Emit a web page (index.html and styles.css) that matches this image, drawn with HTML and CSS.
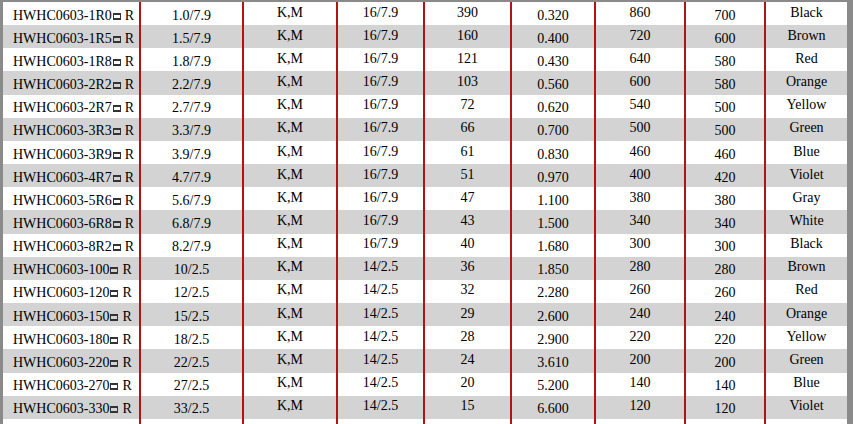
FILE: index.html
```html
<!DOCTYPE html>
<html>
<head>
<meta charset="utf-8">
<link rel="stylesheet" href="styles.css">
</head>
<body>
<div class="sheet">
  <div class="row"><div class="c name">HWHC0603-1R0<span class="sq"></span>R</div><div class="c lo">1.0/7.9</div><div class="c hi">K,M</div><div class="c hi">16/7.9</div><div class="c hi">390</div><div class="c lo">0.320</div><div class="c hi">860</div><div class="c lo">700</div><div class="c hi last">Black</div></div>
  <div class="row alt"><div class="c name">HWHC0603-1R5<span class="sq"></span>R</div><div class="c lo">1.5/7.9</div><div class="c hi">K,M</div><div class="c hi">16/7.9</div><div class="c hi">160</div><div class="c lo">0.400</div><div class="c hi">720</div><div class="c lo">600</div><div class="c hi last">Brown</div></div>
  <div class="row"><div class="c name">HWHC0603-1R8<span class="sq"></span>R</div><div class="c lo">1.8/7.9</div><div class="c hi">K,M</div><div class="c hi">16/7.9</div><div class="c hi">121</div><div class="c lo">0.430</div><div class="c hi">640</div><div class="c lo">580</div><div class="c hi last">Red</div></div>
  <div class="row alt"><div class="c name">HWHC0603-2R2<span class="sq"></span>R</div><div class="c lo">2.2/7.9</div><div class="c hi">K,M</div><div class="c hi">16/7.9</div><div class="c hi">103</div><div class="c lo">0.560</div><div class="c hi">600</div><div class="c lo">580</div><div class="c hi last">Orange</div></div>
  <div class="row"><div class="c name">HWHC0603-2R7<span class="sq"></span>R</div><div class="c lo">2.7/7.9</div><div class="c hi">K,M</div><div class="c hi">16/7.9</div><div class="c hi">72</div><div class="c lo">0.620</div><div class="c hi">540</div><div class="c lo">500</div><div class="c hi last">Yellow</div></div>
  <div class="row alt"><div class="c name">HWHC0603-3R3<span class="sq"></span>R</div><div class="c lo">3.3/7.9</div><div class="c hi">K,M</div><div class="c hi">16/7.9</div><div class="c hi">66</div><div class="c lo">0.700</div><div class="c hi">500</div><div class="c lo">500</div><div class="c hi last">Green</div></div>
  <div class="row"><div class="c name">HWHC0603-3R9<span class="sq"></span>R</div><div class="c lo">3.9/7.9</div><div class="c hi">K,M</div><div class="c hi">16/7.9</div><div class="c hi">61</div><div class="c lo">0.830</div><div class="c hi">460</div><div class="c lo">460</div><div class="c hi last">Blue</div></div>
  <div class="row alt"><div class="c name">HWHC0603-4R7<span class="sq"></span>R</div><div class="c lo">4.7/7.9</div><div class="c hi">K,M</div><div class="c hi">16/7.9</div><div class="c hi">51</div><div class="c lo">0.970</div><div class="c hi">400</div><div class="c lo">420</div><div class="c hi last">Violet</div></div>
  <div class="row"><div class="c name">HWHC0603-5R6<span class="sq"></span>R</div><div class="c lo">5.6/7.9</div><div class="c hi">K,M</div><div class="c hi">16/7.9</div><div class="c hi">47</div><div class="c lo">1.100</div><div class="c hi">380</div><div class="c lo">380</div><div class="c hi last">Gray</div></div>
  <div class="row alt"><div class="c name">HWHC0603-6R8<span class="sq"></span>R</div><div class="c lo">6.8/7.9</div><div class="c hi">K,M</div><div class="c hi">16/7.9</div><div class="c hi">43</div><div class="c lo">1.500</div><div class="c hi">340</div><div class="c lo">340</div><div class="c hi last">White</div></div>
  <div class="row"><div class="c name">HWHC0603-8R2<span class="sq"></span>R</div><div class="c lo">8.2/7.9</div><div class="c hi">K,M</div><div class="c hi">16/7.9</div><div class="c hi">40</div><div class="c lo">1.680</div><div class="c hi">300</div><div class="c lo">300</div><div class="c hi last">Black</div></div>
  <div class="row alt"><div class="c name">HWHC0603-100<span class="sq"></span>R</div><div class="c lo">10/2.5</div><div class="c hi">K,M</div><div class="c hi">14/2.5</div><div class="c hi">36</div><div class="c lo">1.850</div><div class="c hi">280</div><div class="c lo">280</div><div class="c hi last">Brown</div></div>
  <div class="row"><div class="c name">HWHC0603-120<span class="sq"></span>R</div><div class="c lo">12/2.5</div><div class="c hi">K,M</div><div class="c hi">14/2.5</div><div class="c hi">32</div><div class="c lo">2.280</div><div class="c hi">260</div><div class="c lo">260</div><div class="c hi last">Red</div></div>
  <div class="row alt"><div class="c name">HWHC0603-150<span class="sq"></span>R</div><div class="c lo">15/2.5</div><div class="c hi">K,M</div><div class="c hi">14/2.5</div><div class="c hi">29</div><div class="c lo">2.600</div><div class="c hi">240</div><div class="c lo">240</div><div class="c hi last">Orange</div></div>
  <div class="row"><div class="c name">HWHC0603-180<span class="sq"></span>R</div><div class="c lo">18/2.5</div><div class="c hi">K,M</div><div class="c hi">14/2.5</div><div class="c hi">28</div><div class="c lo">2.900</div><div class="c hi">220</div><div class="c lo">220</div><div class="c hi last">Yellow</div></div>
  <div class="row alt"><div class="c name">HWHC0603-220<span class="sq"></span>R</div><div class="c lo">22/2.5</div><div class="c hi">K,M</div><div class="c hi">14/2.5</div><div class="c hi">24</div><div class="c lo">3.610</div><div class="c hi">200</div><div class="c lo">200</div><div class="c hi last">Green</div></div>
  <div class="row"><div class="c name">HWHC0603-270<span class="sq"></span>R</div><div class="c lo">27/2.5</div><div class="c hi">K,M</div><div class="c hi">14/2.5</div><div class="c hi">20</div><div class="c lo">5.200</div><div class="c hi">140</div><div class="c lo">140</div><div class="c hi last">Blue</div></div>
  <div class="row alt"><div class="c name">HWHC0603-330<span class="sq"></span>R</div><div class="c lo">33/2.5</div><div class="c hi">K,M</div><div class="c hi">14/2.5</div><div class="c hi">15</div><div class="c lo">6.600</div><div class="c hi">120</div><div class="c lo">120</div><div class="c hi last">Violet</div></div>
  <div class="row tail"><div class="c"></div><div class="c"></div><div class="c"></div><div class="c"></div><div class="c"></div><div class="c"></div><div class="c"></div><div class="c"></div><div class="c last"></div></div>
</div>
</body>
</html>
```
FILE: styles.css
```css
html, body {
  margin: 0;
  padding: 0;
  width: 853px;
  height: 424px;
  overflow: hidden;
  background: #ffffff;
}
.sheet {
  box-sizing: border-box;
  width: 853px;
  height: 424px;
  border-top: 2px solid #8a8a8a;
  border-left: 3px solid #8a8a8a;
  border-right: 6px solid #8a8a8a;
  display: grid;
  grid-auto-rows: 23.1667px;
  font-family: "Liberation Serif", "Times New Roman", serif;
  font-size: 14px;
  color: #000;
}
.row {
  display: grid;
  grid-template-columns: 138px 103px 94px 87px 87px 84px 90px 80px 81px;
  background: #ffffff;
}
.row.alt {
  background: #d3d3d3;
}
.row.tail {
  height: 6px;
}
.c {
  box-sizing: border-box;
  border-right: 2px solid #b11414;
  display: flex;
  align-items: center;
  justify-content: center;
  white-space: nowrap;
  line-height: 1;
}
.c.last {
  border-right: none;
}
.c.name {
  justify-content: flex-start;
  padding-left: 10px;
  padding-top: 4px;
}
.c.lo {
  padding-top: 4px;
}
.c.hi {
  padding-bottom: 2px;
}
.sq {
  display: inline-block;
  box-sizing: border-box;
  width: 8px;
  height: 7px;
  border-top: 2px solid #333;
  border-bottom: 2px solid #333;
  border-left: 1px solid #333;
  border-right: 1px solid #333;
  margin: 1px 4px 0 1px;
}
```
